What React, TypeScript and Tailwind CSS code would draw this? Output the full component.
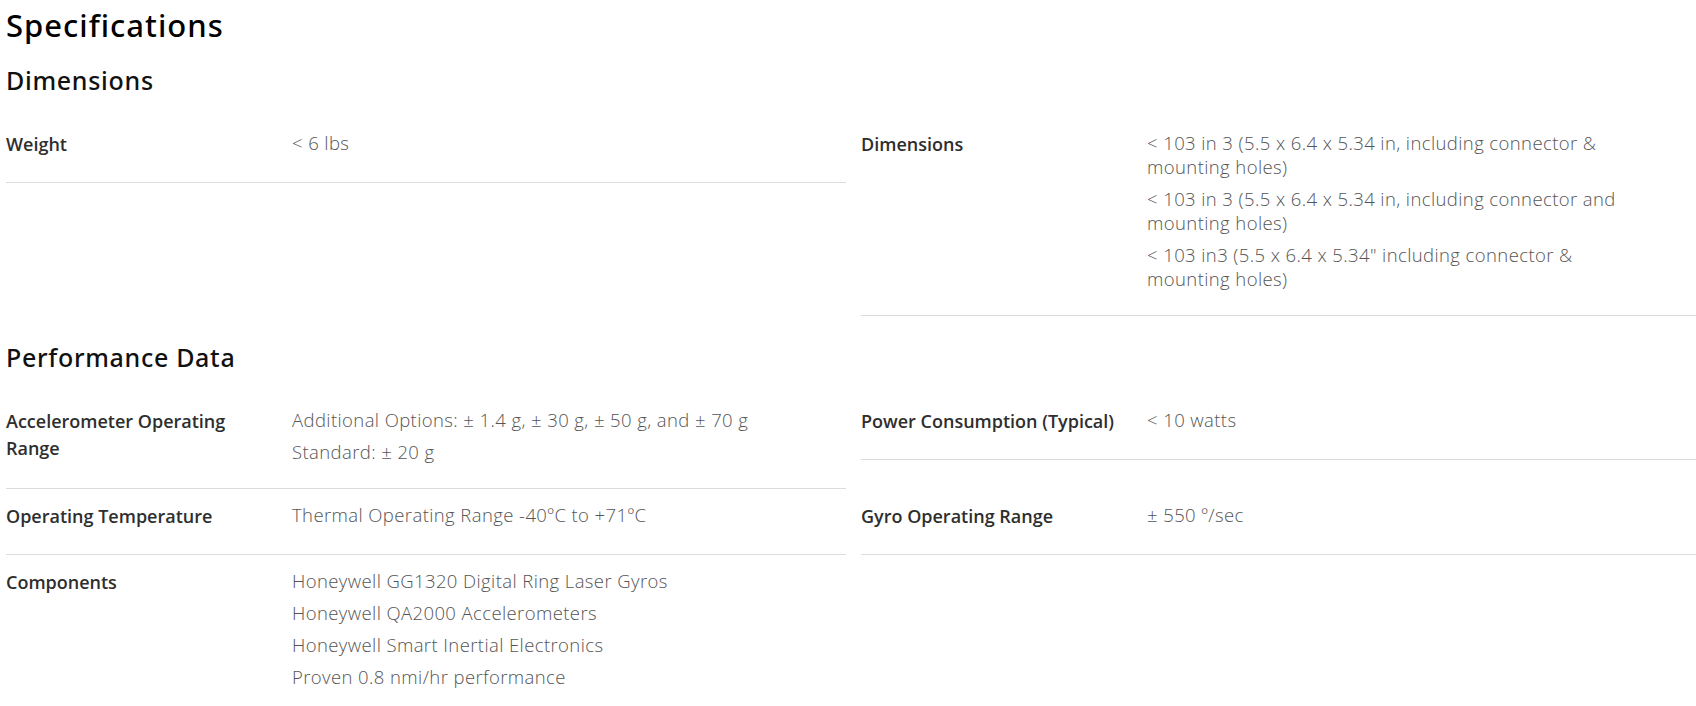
import React from "react";

type Row = { label: string; values: string[] } | null;

function Cell({ row }: { row: Row }) {
  if (!row) return <div />;
  return (
    <div className="flex border-b border-[#dcdcdc] pt-[14px] pb-[24px]">
      <div className="w-[286px] shrink-0 pr-4 text-[18px] leading-[27px] font-semibold text-[#2e2e2e]">
        {row.label}
      </div>
      <div className="flex w-[480px] flex-col gap-2 text-[18.5px] leading-6 font-light tracking-[0.4px] text-[#555]">
        {row.values.map((v, i) => (
          <p key={i}>{v}</p>
        ))}
      </div>
    </div>
  );
}

function Section({ title, rows, className }: { title: string; rows: Row[]; className: string }) {
  return (
    <section className={className}>
      <h2 className="font-['Noto_Sans','Open_Sans',sans-serif] text-[25px] leading-[32px] font-medium tracking-[0.7px] text-[#111]">
        {title}
      </h2>
      <div className="mt-[21px] grid grid-cols-[840px_840px] items-start gap-x-[15px]">
        {rows.map((r, i) => (
          <Cell key={i} row={r} />
        ))}
      </div>
    </section>
  );
}

export default function App() {
  const dims: Row[] = [
    { label: "Weight", values: ["< 6 lbs"] },
    {
      label: "Dimensions",
      values: [
        "< 103 in 3 (5.5 x 6.4 x 5.34 in, including connector & mounting holes)",
        "< 103 in 3 (5.5 x 6.4 x 5.34 in, including connector and mounting holes)",
        "< 103 in3 (5.5 x 6.4 x 5.34\" including connector & mounting holes)",
      ],
    },
  ];
  const perf: Row[] = [
    {
      label: "Accelerometer Operating Range",
      values: ["Additional Options: ± 1.4 g, ± 30 g, ± 50 g, and ± 70 g", "Standard: ± 20 g"],
    },
    { label: "Power Consumption (Typical)", values: ["< 10 watts"] },
    { label: "Operating Temperature", values: ["Thermal Operating Range -40ºC to +71ºC"] },
    { label: "Gyro Operating Range", values: ["± 550 º/sec"] },
    {
      label: "Components",
      values: [
        "Honeywell GG1320 Digital Ring Laser Gyros",
        "Honeywell QA2000 Accelerometers",
        "Honeywell Smart Inertial Electronics",
        "Proven 0.8 nmi/hr performance",
      ],
    },
    null,
  ];
  return (
    <div className="h-[706px] w-[1696px] overflow-hidden bg-white pl-[6px] pt-[5px] font-['Open_Sans',sans-serif]">
      <h1 className="font-['Noto_Sans','Open_Sans',sans-serif] text-[31px] leading-[40px] font-medium tracking-[1px] text-black">
        Specifications
      </h1>
      <Section title="Dimensions" rows={dims} className="mt-[19px]" />
      <Section title="Performance Data" rows={perf} className="mt-[25px]" />
    </div>
  );
}
